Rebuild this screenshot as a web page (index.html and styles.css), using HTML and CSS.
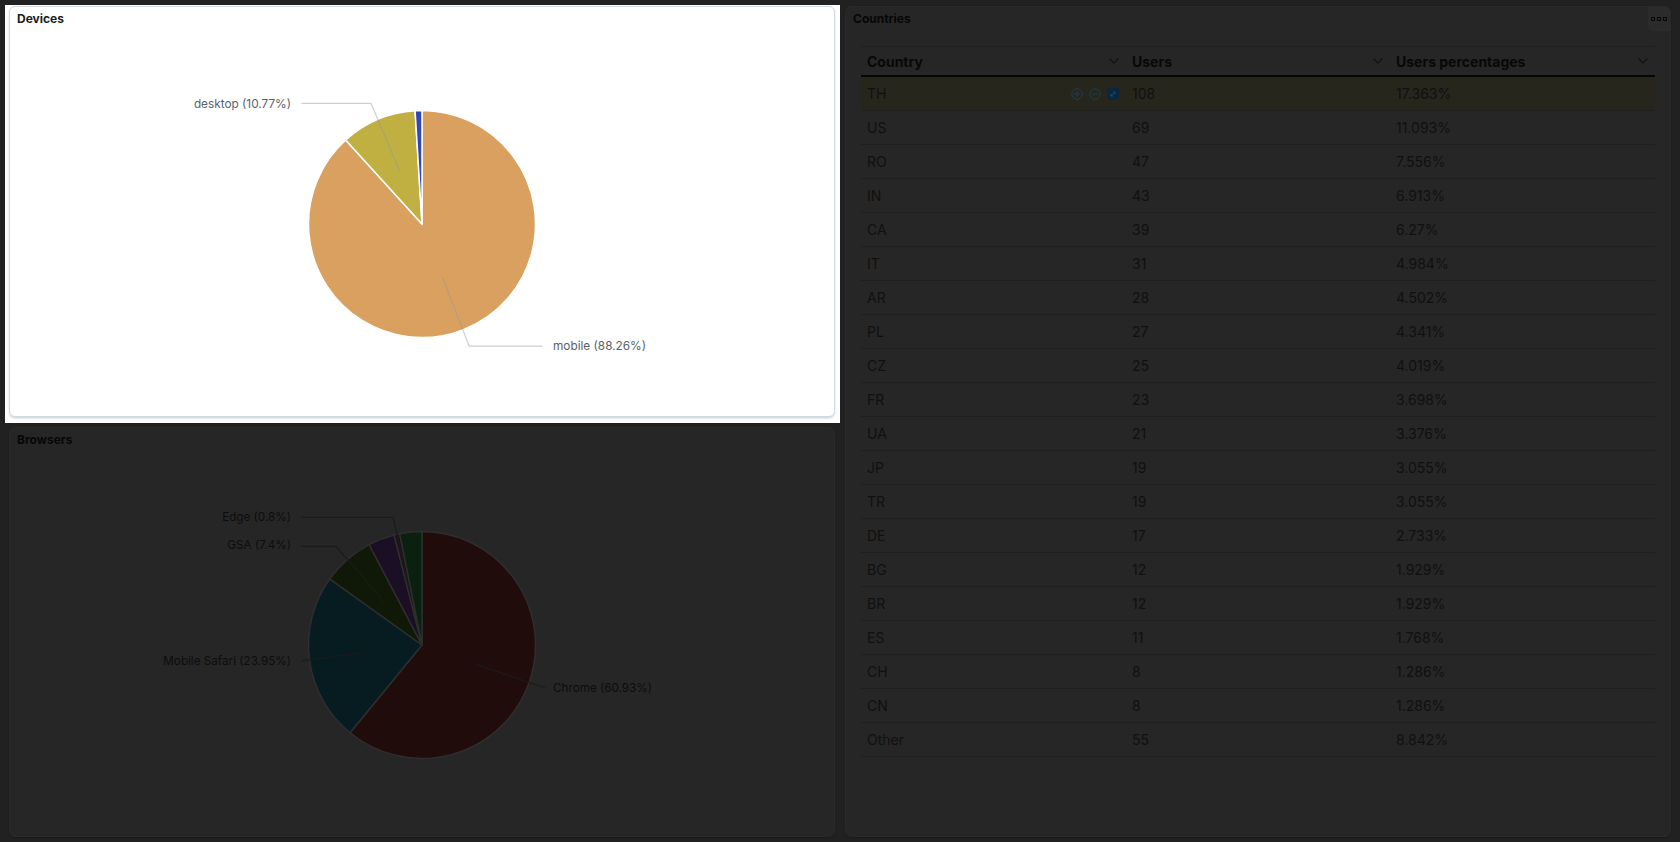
FILE: index.html
```html
<!DOCTYPE html>
<html lang="en">
<head>
<meta charset="utf-8">
<title>Dashboard</title>
<link rel="stylesheet" href="styles.css">
</head>
<body>
<div class="dash">
  <div class="col-left">
    <div class="focus">
      <section class="panel panel-light">
        <header class="panel-head"><h2 class="panel-title">Devices</h2></header>
        <svg class="chart" width="824" height="385" viewBox="10 31 824 385">
          <g class="slices-light">
            <path fill="#DAA060" d="M422,224 L422,110.5 A113.5,113.5 0 1 1 345.68,139.99 Z"/>
            <path fill="#C0B042" d="M422,224 L345.68,139.99 A113.5,113.5 0 0 1 415.09,110.71 Z"/>
            <path fill="#3346B6" d="M422,224 L415.09,110.71 A113.5,113.5 0 0 1 422,110.5 Z"/>
          </g>
          <g class="links-light">
            <polyline points="399.6,171 371,103.3 301.5,103.3"/>
            <polyline points="442.7,277.6 469.2,346.2 542.6,346.2"/>
          </g>
          <g class="labels-light">
            <text x="291" y="108" text-anchor="end">desktop (10.77%)</text>
            <text x="553" y="350">mobile (88.26%)</text>
          </g>
        </svg>
      </section>
    </div>
    <section class="panel panel-dark browsers">
      <header class="panel-head"><h2 class="panel-title">Browsers</h2></header>
      <svg class="chart" width="824" height="384" viewBox="10 31 824 384">
        <g class="slices-dark">
          <path fill="#200d0b" d="M422,224 L422,110.5 A113.5,113.5 0 1 1 350.04,311.77 Z"/>
          <path fill="#071c20" d="M422,224 L350.04,311.77 A113.5,113.5 0 0 1 329.69,157.97 Z"/>
          <path fill="#101908" d="M422,224 L329.69,157.97 A113.5,113.5 0 0 1 369.09,123.59 Z"/>
          <path fill="#1a0f25" d="M422,224 L369.09,123.59 A113.5,113.5 0 0 1 394.06,114 Z"/>
          <path fill="#1f0f18" d="M422,224 L394.06,114 A113.5,113.5 0 0 1 399.63,112.72 Z"/>
          <path fill="#0a2110" d="M422,224 L399.63,112.72 A113.5,113.5 0 0 1 422,110.5 Z"/>
        </g>
        <g class="links-dark">
          <polyline points="409.3,167.9 393,96.3 301.5,96.3"/>
          <polyline points="384.2,180.7 335.9,125.3 301.5,125.3"/>
          <polyline points="365,231.5 301.5,239.9"/>
          <polyline points="476.1,243.4 545.3,267"/>
        </g>
        <g class="labels-dark">
          <text x="291" y="100" text-anchor="end">Edge (0.8%)</text>
          <text x="291" y="128" text-anchor="end">GSA (7.4%)</text>
          <text x="291" y="244" text-anchor="end">Mobile Safari (23.95%)</text>
          <text x="553" y="271">Chrome (60.93%)</text>
        </g>
      </svg>
    </section>
  </div>

  <section class="panel panel-dark countries">
    <header class="panel-head">
      <h2 class="panel-title">Countries</h2>
      <button class="options" type="button" aria-label="Panel options">
        <svg width="16" height="4" viewBox="0 0 16 4"><rect x="0.5" y="0.5" width="3" height="3"/><rect x="6.5" y="0.5" width="3" height="3"/><rect x="12.5" y="0.5" width="3" height="3"/></svg>
      </button>
    </header>
    <div class="table-wrap">
      <div class="grid">
        <div class="row head">
          <div class="cell"><span>Country</span><svg class="chev" width="10" height="6" viewBox="0 0 10 6"><polyline points="0.5,0.5 5,5 9.5,0.5"/></svg></div>
          <div class="cell"><span>Users</span><svg class="chev" width="10" height="6" viewBox="0 0 10 6"><polyline points="0.5,0.5 5,5 9.5,0.5"/></svg></div>
          <div class="cell"><span>Users percentages</span><svg class="chev" width="10" height="6" viewBox="0 0 10 6"><polyline points="0.5,0.5 5,5 9.5,0.5"/></svg></div>
        </div>
        <div class="row hover">
          <div class="cell"><span>TH</span>
            <span class="actions">
              <svg class="act" width="12" height="12" viewBox="0 0 12 12"><circle cx="6" cy="6" r="5.25"/><line x1="6" y1="3" x2="6" y2="9"/><line x1="3" y1="6" x2="9" y2="6"/></svg>
              <svg class="act" width="12" height="12" viewBox="0 0 12 12"><circle cx="6" cy="6" r="5.25"/><line x1="3" y1="6" x2="9" y2="6"/></svg>
              <svg class="expand" width="12" height="12" viewBox="0 0 12 12"><rect width="12" height="12" rx="2"/><line x1="4" y1="8" x2="8" y2="4"/><polyline points="6,4 8,4 8,6"/><polyline points="4,6 4,8 6,8"/></svg>
            </span>
          </div>
          <div class="cell">108</div><div class="cell">17.363%</div>
        </div>
        <div class="row"><div class="cell">US</div><div class="cell">69</div><div class="cell">11.093%</div></div>
        <div class="row"><div class="cell">RO</div><div class="cell">47</div><div class="cell">7.556%</div></div>
        <div class="row"><div class="cell">IN</div><div class="cell">43</div><div class="cell">6.913%</div></div>
        <div class="row"><div class="cell">CA</div><div class="cell">39</div><div class="cell">6.27%</div></div>
        <div class="row"><div class="cell">IT</div><div class="cell">31</div><div class="cell">4.984%</div></div>
        <div class="row"><div class="cell">AR</div><div class="cell">28</div><div class="cell">4.502%</div></div>
        <div class="row"><div class="cell">PL</div><div class="cell">27</div><div class="cell">4.341%</div></div>
        <div class="row"><div class="cell">CZ</div><div class="cell">25</div><div class="cell">4.019%</div></div>
        <div class="row"><div class="cell">FR</div><div class="cell">23</div><div class="cell">3.698%</div></div>
        <div class="row"><div class="cell">UA</div><div class="cell">21</div><div class="cell">3.376%</div></div>
        <div class="row"><div class="cell">JP</div><div class="cell">19</div><div class="cell">3.055%</div></div>
        <div class="row"><div class="cell">TR</div><div class="cell">19</div><div class="cell">3.055%</div></div>
        <div class="row"><div class="cell">DE</div><div class="cell">17</div><div class="cell">2.733%</div></div>
        <div class="row"><div class="cell">BG</div><div class="cell">12</div><div class="cell">1.929%</div></div>
        <div class="row"><div class="cell">BR</div><div class="cell">12</div><div class="cell">1.929%</div></div>
        <div class="row"><div class="cell">ES</div><div class="cell">11</div><div class="cell">1.768%</div></div>
        <div class="row"><div class="cell">CH</div><div class="cell">8</div><div class="cell">1.286%</div></div>
        <div class="row"><div class="cell">CN</div><div class="cell">8</div><div class="cell">1.286%</div></div>
        <div class="row"><div class="cell">Other</div><div class="cell">55</div><div class="cell">8.842%</div></div>
      </div>
    </div>
  </section>
</div>
</body>
</html>
```

FILE: styles.css
```css
* { box-sizing: border-box; }
html, body { margin: 0; padding: 0; }
body {
  width: 1680px;
  height: 842px;
  overflow: hidden;
  background: #212121;
  font-family: Inter, "Noto Sans", "Liberation Sans", sans-serif;
}
.dash {
  display: grid;
  grid-template-columns: 835px 826px;
  column-gap: 5px;
  padding: 5px 0 0 5px;
  align-items: start;
}
.col-left {
  display: flex;
  flex-direction: column;
  gap: 4px;
}
.focus {
  background: #ffffff;
  padding: 1px 5px 6px 4px;
  height: 418px;
}
.panel {
  border-radius: 6px;
  display: flex;
  flex-direction: column;
  overflow: hidden;
}
.panel-light {
  height: 411px;
  background: #ffffff;
  border: 1px solid #d3dae6;
  box-shadow: 0 1px 2px rgba(152, 162, 179, 0.3), 0 2px 3px -1px rgba(152, 162, 179, 0.35);
}
.panel-dark {
  background: #262626;
  border: 1px solid #2a2a2a;
  box-shadow: 0 1px 2px rgba(0, 0, 0, 0.25);
}
.browsers {
  height: 410px;
  margin: 0 5px 0 4px;
}
.countries {
  height: 831px;
  margin-top: 1px;
}
.panel-head {
  height: 24px;
  flex: none;
  display: flex;
  align-items: center;
  padding: 0 0 0 7px;
}
.panel-title {
  margin: 0;
  font-size: 12px;
  line-height: 16px;
  font-weight: 700;
  color: #1a1c21;
}
.panel-dark .panel-title { color: #060606; }
.options {
  margin-left: auto;
  width: 22px;
  height: 24px;
  border: 0;
  padding: 0;
  background: #2b2b2b;
  border-bottom-left-radius: 4px;
  display: flex;
  align-items: center;
  justify-content: center;
}
.options rect { fill: none; stroke: #080808; stroke-width: 1; }
.chart { display: block; flex: none; }
.slices-light path { stroke: #ffffff; stroke-width: 1.5; stroke-linejoin: round; }
.slices-dark path { stroke: #2e2e2e; stroke-width: 1.5; stroke-linejoin: round; }
.links-light polyline { fill: none; stroke: rgba(140, 150, 165, 0.45); stroke-width: 1.2; }
.links-dark polyline { fill: none; stroke: #1b1b1b; stroke-width: 1.2; }
.labels-light text { font-size: 11.8px; fill: #5a606b; font-family: Inter, "Noto Sans", sans-serif; }
.labels-dark text { font-size: 11.7px; fill: #0d0d0d; font-family: Inter, "Noto Sans", sans-serif; }

.table-wrap { padding: 15px 15px 0; }
.grid { width: 794px; }
.row {
  display: grid;
  grid-template-columns: 265px 264px 265px;
  height: 34px;
  border-bottom: 1px solid #1f1f1f;
  color: #101010;
  font-size: 14px;
}
.row.head {
  height: 31px;
  border-top: 1px solid #202020;
  border-bottom: 2px solid #060606;
  font-weight: 700;
  color: #080808;
}
.row.hover { background: #27261d; }
.cell {
  display: flex;
  align-items: center;
  padding: 0 7px 0 6px;
  white-space: nowrap;
}
.head .cell { justify-content: space-between; }
.chev polyline { fill: none; stroke: #111111; stroke-width: 1.1; }
.actions {
  margin-left: auto;
  display: flex;
  align-items: center;
  gap: 6px;
}
.act circle, .act line { fill: none; stroke: #1e3d52; stroke-width: 1; }
.expand rect { fill: #0b2740; }
.expand line, .expand polyline { fill: none; stroke: #24496b; stroke-width: 1; }
```
